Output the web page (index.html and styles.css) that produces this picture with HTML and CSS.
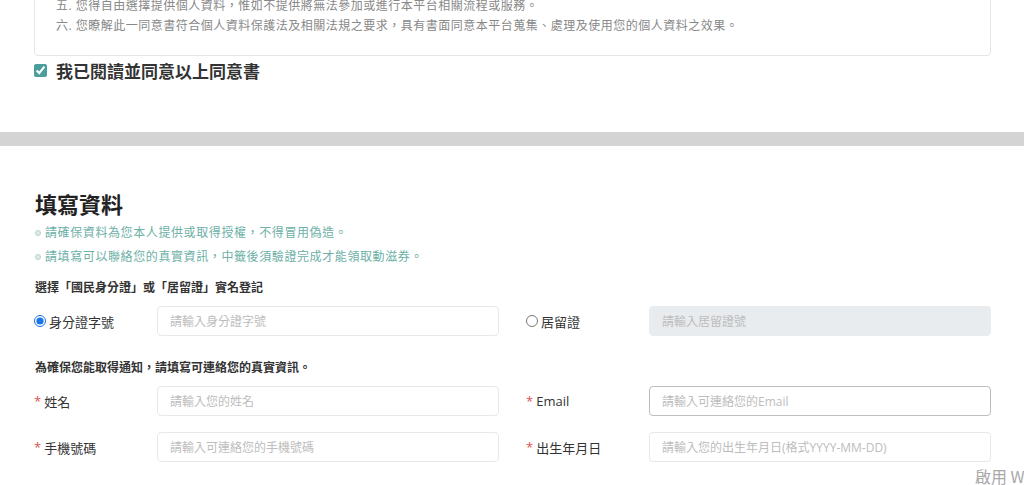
FILE: index.html
```html
<!DOCTYPE html>
<html lang="zh-Hant">
<head>
  <meta charset="UTF-8">
  <title>填寫資料</title>
  <link rel="stylesheet" href="styles.css">
</head>
<body>

  <div class="consent">
    <div class="consent-box">
      <p>五. 您得自由選擇提供個人資料，惟如不提供將無法參加或進行本平台相關流程或服務。</p>
      <p>六. 您瞭解此一同意書符合個人資料保護法及相關法規之要求，具有書面同意本平台蒐集、處理及使用您的個人資料之效果。</p>
    </div>
    <label class="agree">
      <input type="checkbox" checked>
      <span>我已閱讀並同意以上同意書</span>
    </label>
  </div>

  <div class="divider"></div>

  <div class="form">
    <h2>填寫資料</h2>
    <ul class="notes">
      <li>請確保資料為您本人提供或取得授權，不得冒用偽造。</li>
      <li>請填寫可以聯絡您的真實資訊，中籤後須驗證完成才能領取動滋券。</li>
    </ul>

    <div class="hint">選擇「國民身分證」或「居留證」實名登記</div>
    <div class="grid">
      <div class="field">
        <label class="label"><input type="radio" name="idtype" checked> 身分證字號</label>
        <input class="text" type="text" placeholder="請輸入身分證字號">
      </div>
      <div class="field">
        <label class="label"><input type="radio" name="idtype"> 居留證</label>
        <input class="text" type="text" placeholder="請輸入居留證號" disabled>
      </div>
    </div>

    <div class="hint">為確保您能取得通知，請填寫可連絡您的真實資訊。</div>
    <div class="grid">
      <div class="field">
        <label class="label"><span class="req">*</span> 姓名</label>
        <input class="text" type="text" placeholder="請輸入您的姓名">
      </div>
      <div class="field">
        <label class="label"><span class="req">*</span> <span class="latin">Email</span></label>
        <input class="text focus" type="text" placeholder="請輸入可連絡您的Email">
      </div>
      <div class="field">
        <label class="label"><span class="req">*</span> 手機號碼</label>
        <input class="text" type="text" placeholder="請輸入可連絡您的手機號碼">
      </div>
      <div class="field">
        <label class="label"><span class="req">*</span> 出生年月日</label>
        <input class="text" type="text" placeholder="請輸入您的出生年月日(格式YYYY-MM-DD)">
      </div>
    </div>
  </div>

  <div class="watermark"><span>啟用 Windows</span></div>

</body>
</html>
```

FILE: styles.css
```css
html, body {
  height: 485px;
}
body {
  margin: 0;
  padding: 0;
  background: #fff;
  color: #333;
  font-family: "Open Sans", "Noto Sans CJK TC", sans-serif;
  overflow: hidden;
  position: relative;
}
p, h2, ul {
  margin: 0;
  padding: 0;
}
.consent {
  padding: 0 33px 0 34px;
}
.consent-box {
  margin-top: -15px;
  padding: 10px 21px 19px;
  border: 1px solid #e6e6e6;
  border-radius: 4px;
}
.consent-box p {
  font-size: 12px;
  line-height: 20px;
  letter-spacing: 0.5px;
  color: #888;
}
.agree {
  display: flex;
  align-items: center;
  margin-top: 2px;
  height: 24px;
}
.agree input {
  margin: 0 9px 0 0;
  width: 13px;
  height: 13px;
  accent-color: #4a9e9c;
}
.agree span {
  font-size: 17px;
  font-weight: 700;
  color: #333;
}
.divider {
  margin-top: 50px;
  height: 14px;
  background: #d4d4d4;
}
.form {
  padding: 43px 33px 0 35px;
}
.form h2 {
  font-size: 22px;
  line-height: 30px;
  font-weight: 700;
  color: #222;
}
.notes {
  list-style: none;
  margin-top: 2px;
}
.notes li {
  font-size: 12px;
  line-height: 24px;
  letter-spacing: 0.6px;
  color: #6cb0a6;
  display: flex;
  align-items: center;
}
.notes li::before {
  content: "";
  width: 4px;
  height: 4px;
  border: 1px solid #b6d4cf;
  background: #dcecea;
  border-radius: 50%;
  margin-right: 4px;
}
.hint {
  margin-top: 9px;
  font-size: 12px;
  line-height: 20px;
  font-weight: 700;
  color: #333;
}
.grid + .hint {
  margin-top: 22px;
}
.grid {
  margin-top: 8px;
  display: grid;
  grid-template-columns: 465px 465px;
  column-gap: 27px;
  row-gap: 16px;
  margin-left: -1px;
}
.field {
  display: flex;
  align-items: center;
}
.label {
  width: 123px;
  flex: none;
  font-size: 13px;
  color: #333;
  display: flex;
  align-items: center;
  gap: 3px;
}
.label input {
  margin: 0;
  width: 12px;
  height: 12px;
  accent-color: #1a73e8;
}
.req {
  color: #d9534f;
  font-size: 13px;
}
.latin {
  font-family: "Open Sans", sans-serif;
}
.text {
  box-sizing: border-box;
  width: 342px;
  height: 30px;
  padding: 0 12px;
  border: 1px solid #e8e8e8;
  border-radius: 4px;
  font-family: "Open Sans", "Noto Sans CJK TC", sans-serif;
  font-size: 12px;
  color: #333;
  background: #fff;
  outline: none;
}
.text::placeholder {
  color: #bdbdbd;
}
.text:disabled {
  background: #e9ecef;
  border-color: #e9ecef;
}
.text.focus {
  border-color: #bdbdbd;
}
.watermark {
  position: absolute;
  left: 975px;
  top: 464px;
  width: 49px;
  overflow: hidden;
  font-size: 16px;
  color: #a8a8a8;
  white-space: nowrap;
  font-family: "Noto Sans CJK TC", sans-serif;
}
```
